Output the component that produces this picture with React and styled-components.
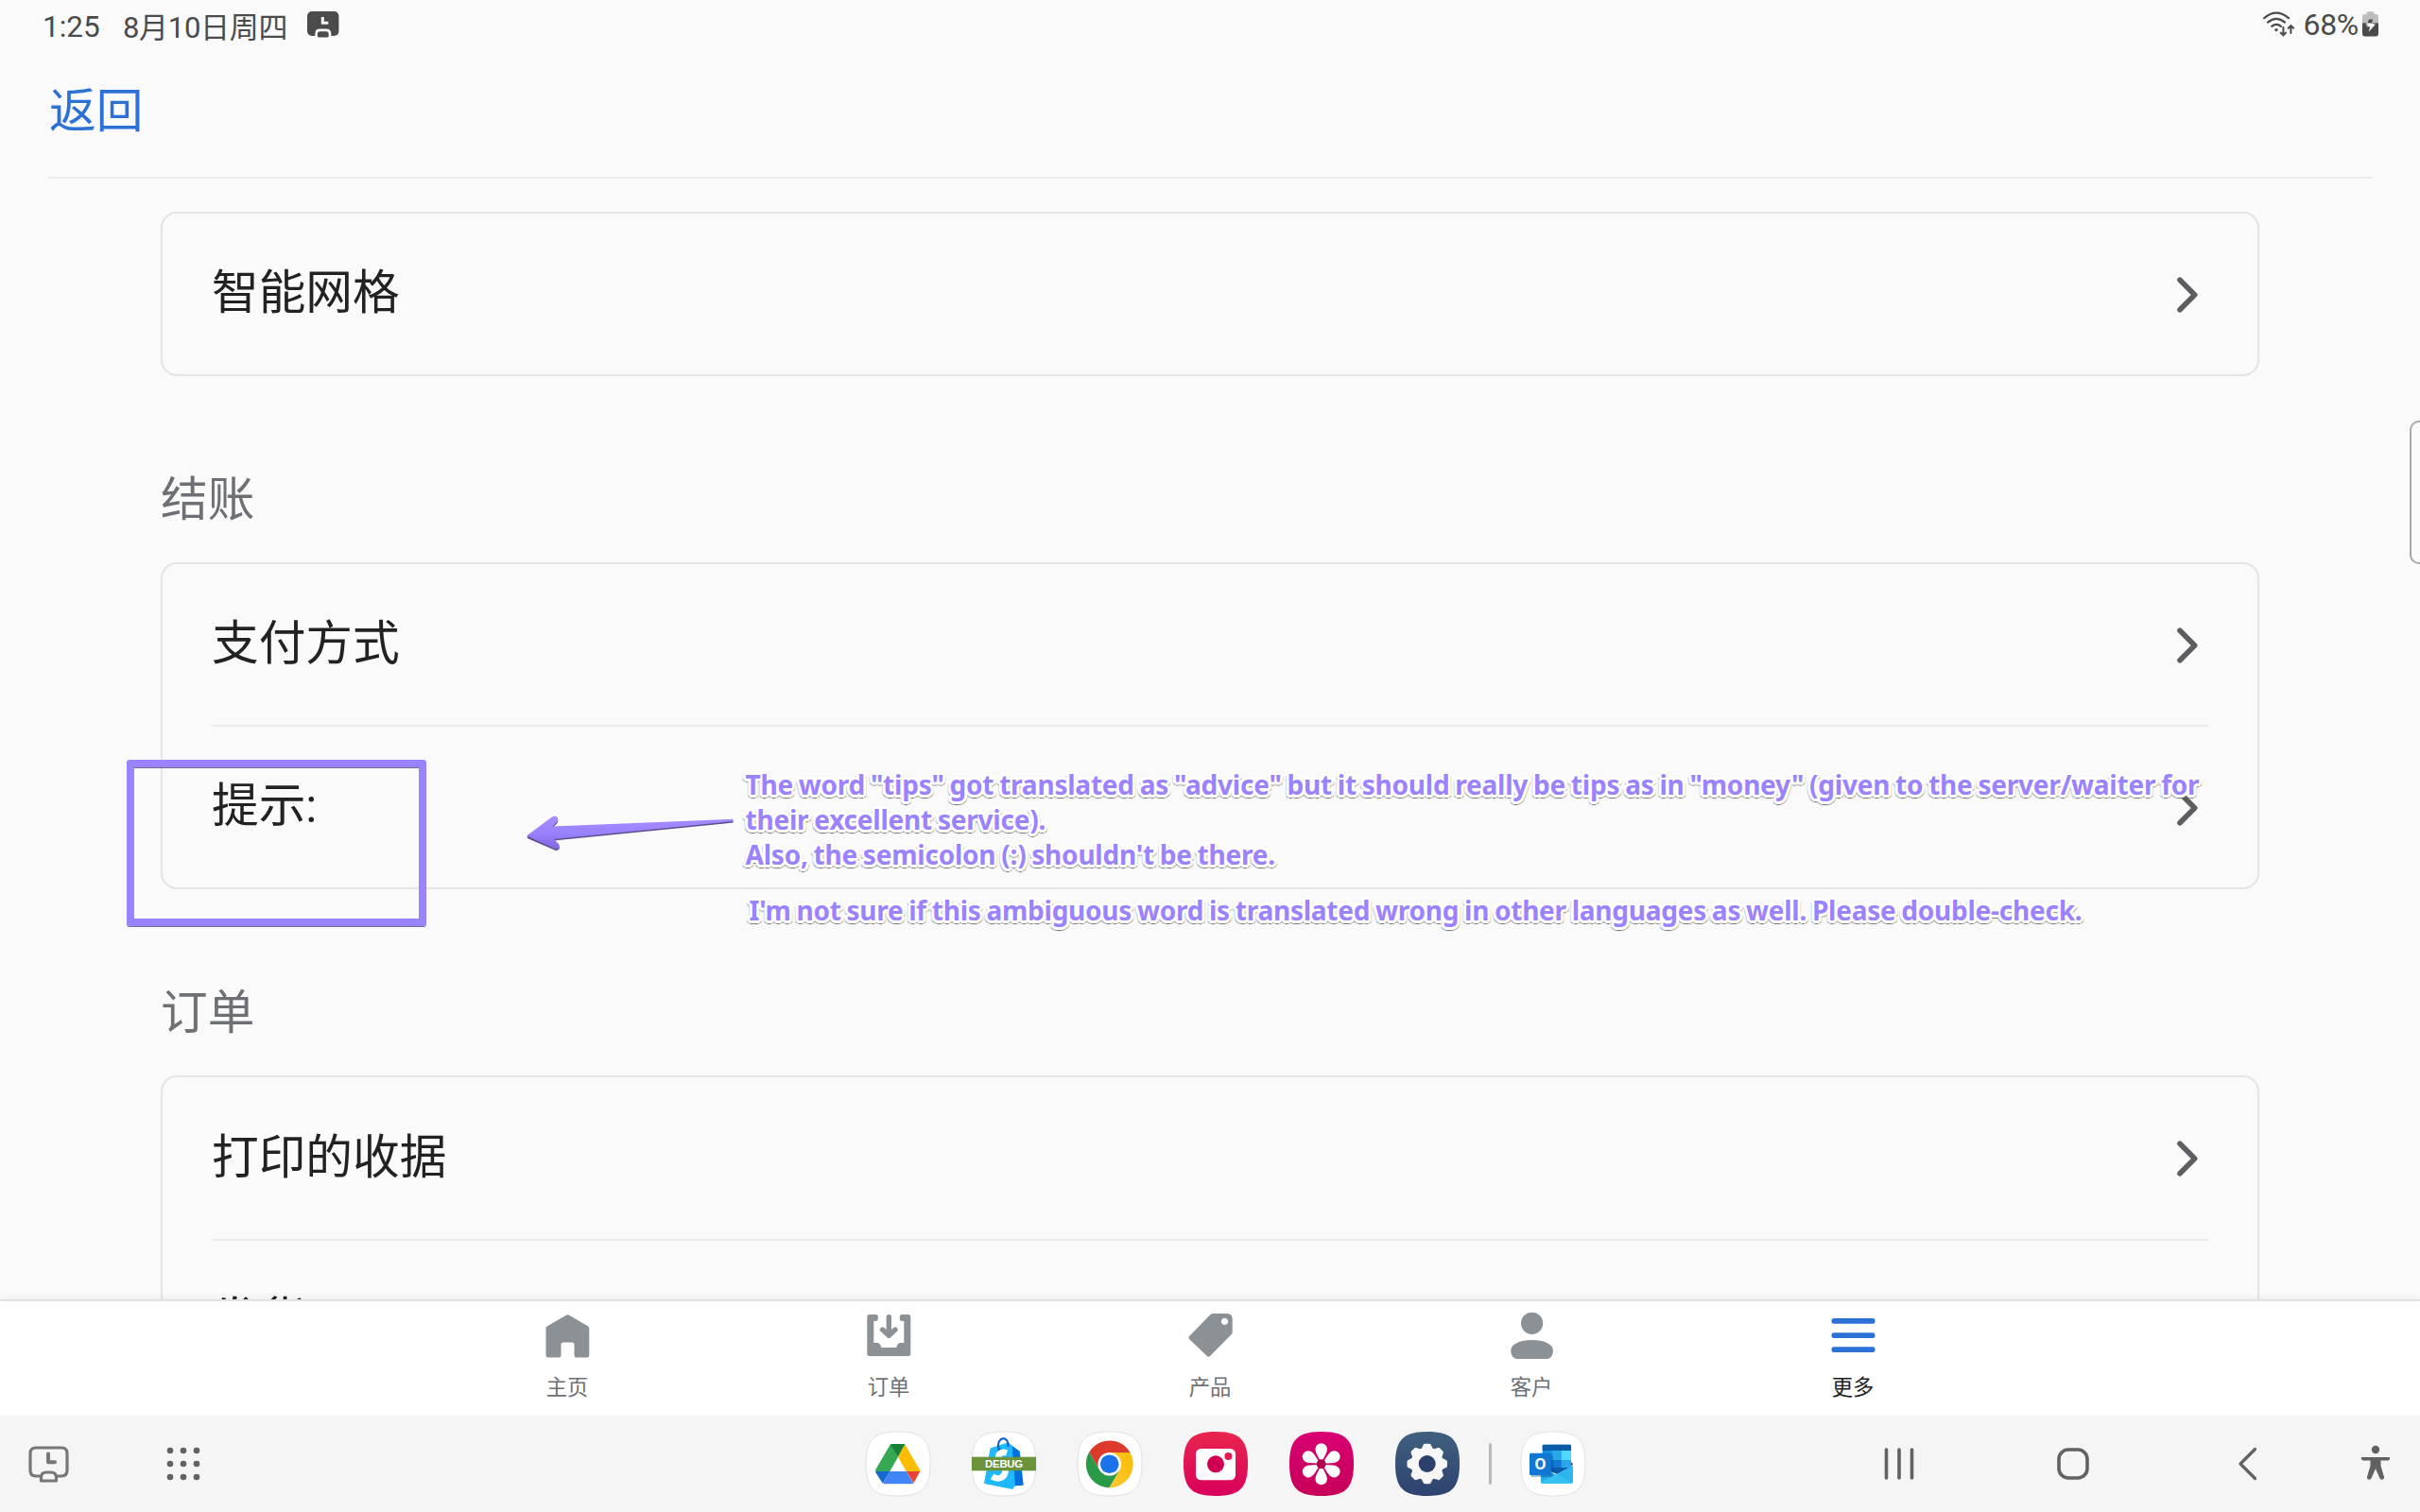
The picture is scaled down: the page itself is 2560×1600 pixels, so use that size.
import React from "react";
import styled, { createGlobalStyle } from "styled-components";

const GlobalStyle = createGlobalStyle`
  * { box-sizing: border-box; }
  body { margin: 0; background: #fafafa; }
`;

const Screen = styled.div`
  position: relative;
  display: flex;
  flex-direction: column;
  width: 2560px;
  height: 1600px;
  overflow: hidden;
  background: #fafafa;
  color: #202223;
  font-family: Roboto, "Noto Sans CJK SC", sans-serif;
`;

const StatusBar = styled.header`
  display: flex;
  justify-content: space-between;
  height: 56px;
  padding: 12px 44px 0 45px;
  color: #4b4b4b;
  font-size: 31.5px;
  line-height: 34px;
  white-space: pre;
`;

const StatusGroup = styled.div`
  display: flex;
  align-items: flex-start;
`;

const Clock = styled.span`
  width: 85px;
`;

const DateText = styled.span`
  width: 195px;
  padding-top: 1px;
  font-size: 31px;
  letter-spacing: -0.3px;
`;

const Battery = styled.span`
  margin: -3px 4px 0 8px;
  font-size: 32px;
  letter-spacing: -0.3px;
`;

const TopBar = styled.nav`
  display: flex;
  height: 133px;
  margin: 0 51px;
  padding: 24px 0 0 1px;
  border-bottom: 2px solid #ebebeb;
`;

const BackLink = styled.a`
  color: #2c72d6;
  font-size: 49.7px;
  line-height: 76px;
`;

const Content = styled.main`
  flex: 1;
  min-height: 0;
  overflow: hidden;
  padding: 35px 170px 0;
`;

const Section = styled.section`
  display: flex;
  flex-direction: column;
`;

const SectionTitle = styled.h2`
  height: 197px;
  margin: 0;
  padding-top: 93px;
  color: #6d7175;
  font-size: 49.7px;
  font-weight: 400;
  line-height: 76px;
`;

const Card = styled.div`
  display: flex;
  flex-direction: column;
  padding: 0 51px;
  border: 2px solid #e4e5e5;
  border-radius: 17px;
`;

const Row = styled.div`
  display: flex;
  flex-shrink: 0;
  justify-content: space-between;
  align-items: center;
  height: ${(p) => p.$height + (p.$divided ? 2 : 0)}px;
  padding: 1px 10px 0 1px;
  border-top: ${(p) => (p.$divided ? "2px solid #ebebeb" : "none")};
`;

const RowLabel = styled.span`
  padding-bottom: 3px;
  font-size: 49.7px;
  line-height: 76px;
`;

const TabBar = styled.nav`
  display: flex;
  justify-content: center;
  height: 123px;
  border-top: 2px solid #e3e3e3;
  background: #fff;
  box-shadow: 0 0 9px rgba(0, 0, 0, 0.07);
  z-index: 1;
`;

const Tab = styled.div`
  display: flex;
  flex-direction: column;
  align-items: center;
  width: 340px;
  padding-top: 10px;
  color: ${(p) => (p.$active ? "#202223" : "#6d7175")};
  font-size: 22.3px;
  line-height: 34px;
`;

const TabIcon = styled.svg`
  width: 52px;
  height: 52px;
  margin-bottom: 12px;
  color: ${(p) => (p.$active ? "#2c72d6" : "#8c9196")};
  fill: currentColor;
`;

const TaskBar = styled.footer`
  display: grid;
  grid-template-columns: 916px 1fr 880px;
  align-items: center;
  height: 102px;
  background: #f5f5f5;
  z-index: 1;
`;

const TaskLeft = styled.div`
  display: flex;
  align-items: center;
  gap: 102px;
  padding-left: 29px;
`;

const Dock = styled.div`
  display: flex;
  align-items: center;
  gap: 44px;
`;

const DockDivider = styled.span`
  width: 3px;
  height: 44px;
  margin: 0 -13px;
  border-radius: 2px;
  background: #b9b9b9;
`;

const SystemNav = styled.div`
  display: flex;
  align-items: center;
  justify-content: flex-end;
  padding-right: 29px;
`;

const NavGlyph = styled.svg`
  width: 36px;
  height: 40px;
  margin-left: ${(p) => p.$gap}px;
  overflow: visible;
  fill: none;
  stroke: #626262;
  stroke-width: 3.6;
  stroke-linecap: round;
  stroke-linejoin: round;
`;

const EdgeHandle = styled.div`
  position: absolute;
  left: 2549px;
  top: 445px;
  width: 20px;
  height: 152px;
  border: 2px solid #a9a9a9;
  border-radius: 10px;
  background: #fbfbfb;
`;

const Highlight = styled.div`
  position: absolute;
  left: 134px;
  top: 804px;
  width: 317px;
  height: 176px;
  border: 8px solid #9b82fe;
  border-radius: 3px;
  box-shadow: 0 1px 0 rgba(70, 60, 110, 0.75), inset 0 1px 0 rgba(70, 60, 110, 0.75);
`;

const Arrow = styled.svg`
  position: absolute;
  left: 550px;
  top: 857px;
  width: 240px;
  height: 50px;
`;

const Note = styled.p`
  position: absolute;
  left: ${(p) => p.$left}px;
  top: ${(p) => p.$top}px;
  margin: 0;
  color: #9b82fe;
  font-family: "Noto Sans", sans-serif;
  font-size: 28px;
  font-weight: 700;
  line-height: 36.9px;
  letter-spacing: ${(p) => p.$track}px;
  word-spacing: -1.2px;
  white-space: pre;
  text-shadow:
    2px 0 0 #fff, -2px 0 0 #fff, 0 2px 0 #fff, 0 -2px 0 #fff,
    2px 2px 0 #fff, -2px 2px 0 #fff, 2px -2px 0 #fff, -2px -2px 0 #fff,
    3px 1px 0 #fff, -3px 1px 0 #fff, 1px 3px 0 #fff, -1px 3px 0 #fff,
    2px 3px 1px #777, -2px 3px 1px #777, 0 4px 1px #777,
    3px 2px 1px #999, -3px 2px 1px #999;
`;

const Chevron = () => (
  <svg width="26" height="42" viewBox="0 0 26 42" fill="none" stroke="#5c5d61" strokeWidth="5.6" strokeLinecap="round" strokeLinejoin="round">
    <path d="M5 5.2 20.7 21 5 36.8" />
  </svg>
);

const SQUIRCLE = "M0 34C0 8.5 8.5 0 34 0S68 8.5 68 34 59.5 68 34 68 0 59.5 0 34Z";

const AppIcon = ({ fill = "#fff", edge, children }) => (
  <svg width="68" height="68" viewBox="0 0 68 68" overflow="visible">
    <path d={SQUIRCLE} fill={fill} stroke={edge ? "#e2e2e2" : "none"} strokeWidth="1" />
    {children}
  </svg>
);

const ScreenClockIcon = () => (
  <svg width="34" height="29" viewBox="0 0 34 29">
    <rect width="33.4" height="26" rx="5" fill="#4b4b4b" />
    <path d="M16.3 6V12.3H22.3" stroke="#fafafa" strokeWidth="3" fill="none" />
    <path d="M8.3 29V24Q8.3 18.6 13.5 18.6H20Q25.3 18.6 25.3 24V29Z" fill="#fafafa" />
    <path d="M10.8 26V24Q10.8 21.3 13.5 21.3H20Q22.7 21.3 22.7 24V26Q22.7 27.6 21 27.6H12.5Q10.8 27.6 10.8 26Z" fill="#4b4b4b" />
  </svg>
);

const WifiIcon = () => (
  <svg width="34" height="28" viewBox="0 0 34 28" fill="none" stroke="#4b4b4b" strokeWidth="2.2" strokeLinecap="round">
    <path d="M1.2 7.2Q14 -3.8 27 7.2M5 11.6Q14 4 23 11.6M9.2 15.8Q14 12 19 15.8" />
    <circle cx="14" cy="19.6" r="1.7" fill="#4b4b4b" stroke="none" />
    <path d="M21.4 17V25M18.7 22.6 21.4 25.3 24.1 22.6M29.4 23V15.6M26.7 17.8 29.4 15.1 32.1 17.8" strokeWidth="2" />
  </svg>
);

const BatteryIcon = () => (
  <svg width="17" height="27" viewBox="0 0 17 27">
    <path d="M4.5 3V2Q4.5 .2 6.3 .2H10.7Q12.5 .2 12.5 2V3H14Q17 3 17 6V13H0V6Q0 3 3 3Z" fill="#bdbdbd" />
    <path d="M0 12.5H17V23.5Q17 26.5 14 26.5H3Q0 26.5 0 23.5Z" fill="#4b4b4b" />
    <path d="M7 8.5H11L10 12.5H5.5Z" fill="#4b4b4b" />
    <path d="M5 12.5H9L8.8 14.6H3.6ZM9.5 12.5 13.8 14 6.6 21.8 8.2 16.2H4Z" fill="#fafafa" />
  </svg>
);

const tabs = [
  {
    label: "主页",
    icon: <path d="M26.5 4.2Q27.5 4.2 28.5 5L48.2 16.6Q49.300 17.400 49.300 19V47Q49.300 49.500 46.800 49.500H36Q33.500 49.500 33.500 47V36Q33.500 33.500 31 33.500H22Q19.500 33.500 19.500 36V47Q19.500 49.500 17 49.500H6Q3.500 49.500 3.500 47V19Q3.500 17.400 4.700 16.600L24.500 5Q25.500 4.200 26.500 4.200Z" />,
  },
  {
    label: "订单",
    icon: (
      <>
        <path d="M5.800 4H12.300Q14.800 4 14.800 6.500V8.500Q14.800 11 12.300 11H10.300V34H14.300Q16.300 34 17 35.800L18.600 39H34L35.600 35.800Q36.300 34 38.300 34H42.300V11H40.300Q37.800 11 37.800 8.500V6.500Q37.800 4 40.300 4H46.800Q49.300 4 49.300 6.500V45.500Q49.300 48 46.800 48H5.800Q3.300 48 3.300 45.500V6.500Q3.300 4 5.800 4Z" />
        <path d="M26.300 6.700V24M19.600 20 26.300 26.300 33 20" fill="none" stroke="currentColor" strokeWidth="5.400" strokeLinecap="round" strokeLinejoin="round" />
      </>
    ),
  },
  {
    label: "产品",
    icon: <path fillRule="evenodd" d="M26.500 4Q27.500 3 29 3H44Q49.700 3 49.700 9V22.500Q49.700 24 48.500 25.200L26 48Q24.500 49.500 23 48L4.500 30.500Q2.500 28.500 4.500 26.500ZM41.500 7.800a3.600 3.600 0 1 0 .01 0Z" />,
  },
  {
    label: "客户",
    icon: (
      <>
        <circle cx="26.600" cy="13.300" r="11.600" />
        <path d="M4.300 41.500C4.300 36 13.300 31 26.600 31S48.900 36 48.900 41.500C48.900 47.500 46.300 51 42.300 51H10.800C6.800 51 4.300 47.500 4.300 41.500Z" />
      </>
    ),
  },
  {
    label: "更多",
    active: true,
    icon: (
      <>
        <rect x="3.500" y="8" width="46" height="5.700" rx="2.500" />
        <rect x="3.500" y="23.200" width="46" height="5.700" rx="2.500" />
        <rect x="3.500" y="38.300" width="46" height="5.700" rx="2.500" />
      </>
    ),
  },
];

const DriveIcon = () => (
  <AppIcon edge>
    <path d="M27.500 13 34 26.700 25.300 42H10.500Q9.700 41 10.500 39.800L25.500 14Q26.300 13 27.500 13Z" fill="#34a853" />
    <path d="M26 13.500Q27 13 28 13H40Q41 13 41.500 13.500L34 26.700Z" fill="#188038" />
    <path d="M41.300 13.300 57 40.500Q57.500 41.500 57.300 42H42.700L34 26.700Z" fill="#fbbc04" />
    <path d="M42.700 42H57.300L50.500 54.500Z" fill="#ea4335" />
    <path d="M25.300 42H42.700L50.300 54.700 48.500 55.300H19.500L18 54.700Z" fill="#4285f4" />
    <path d="M10.200 42H25.300L17.800 54.700 10.500 43.500Z" fill="#1967d2" />
  </AppIcon>
);

const PosIcon = () => (
  <AppIcon edge>
    <path d="M38 11.500 50.700 20.700 54.700 56.700 42 57.500Z" fill="#0071dc" />
    <path d="M19.500 17.500 38.700 11.300 42.700 15.700 46 57 43.300 61 13 55Z" fill="#20b9ff" />
    <path d="M29.500 20.500C26 14 29 7.300 33.300 7.300C37 7.300 38.500 11 38.500 16" fill="none" stroke="#0b5fc4" strokeWidth="2" />
    <circle cx="29.800" cy="20.200" r="2.300" fill="#0b5fc4" />
    <path d="M37 22.500C31 20.500 26.500 24 29 29C31 33 37 35 35.500 42.500C34 50 27 51 21.500 47.500" fill="none" stroke="#fff" strokeWidth="6.500" />
    <rect x="0" y="26.700" width="68" height="14.600" fill="#6b933a" />
    <text x="34" y="38" textAnchor="middle" fill="#fff" fontFamily="Liberation Sans, sans-serif" fontWeight="700" fontSize="11.300" letterSpacing="-0.200">DEBUG</text>
  </AppIcon>
);

const ChromeIcon = () => (
  <AppIcon edge>
    <defs>
      <linearGradient id="chromeYellow" x1="1" y1="0" x2="0" y2="1">
        <stop offset="0" stopColor="#fbbc04" />
        <stop offset="1" stopColor="#fcc934" />
      </linearGradient>
    </defs>
    <g transform="translate(33.700 34.300)">
      <path d="M-21.500 -12.650A25 25 0 0 1 21.700 -12.300L0 -12.300-10.650 6.150Z" fill="#dd3a2b" />
      <path d="M21.700 -12.300A25 25 0 0 1 -.2 24.950L10.650 6.150 0 -12.300Z" fill="url(#chromeYellow)" />
      <path d="M-.2 24.950A25 25 0 0 1 -21.500 -12.650L-10.650 6.150 10.650 6.150Z" fill="#2a9a48" />
      <circle r="12.300" fill="#fff" />
      <circle r="9.800" fill="#1a73e8" />
    </g>
  </AppIcon>
);

const CameraIcon = () => (
  <AppIcon fill="url(#cameraBg)">
    <defs>
      <linearGradient id="cameraBg" x1="0" y1="0" x2="0" y2="1">
        <stop offset="0" stopColor="#e9254d" />
        <stop offset="1" stopColor="#da005c" />
      </linearGradient>
    </defs>
    <rect x="13" y="18" width="42" height="33.300" rx="5.500" fill="#fff" />
    <circle cx="34" cy="34.300" r="9" fill="#cf0052" />
    <circle cx="47.400" cy="26" r="4" fill="#e51a50" />
  </AppIcon>
);

const GalleryIcon = () => (
  <AppIcon fill="url(#galleryBg)">
    <defs>
      <linearGradient id="galleryBg" x1="0" y1="0" x2="0" y2="1">
        <stop offset="0" stopColor="#d90073" />
        <stop offset="1" stopColor="#c60058" />
      </linearGradient>
    </defs>
    <g transform="translate(33.700 34.300)">
      {[0, 60, 120, 180, 240, 300].map((angle) => (
        <path key={angle} transform={`rotate(${angle})`} d="M0 0C-2 -7-6.200-11-6.200-16A6.200 6 0 0 1 6.200-16C6.200-11 2-7 0 0Z" fill="#fff" />
      ))}
      <circle r="5" fill="#b3004c" />
    </g>
  </AppIcon>
);

const SettingsIcon = () => (
  <AppIcon fill="url(#settingsBg)">
    <defs>
      <linearGradient id="settingsBg" x1="0" y1="0" x2="0" y2="1">
        <stop offset="0" stopColor="#40607f" />
        <stop offset="1" stopColor="#2e426f" />
      </linearGradient>
    </defs>
    <g transform="translate(33.700 34)">
      <circle r="17.300" fill="#f7f7f7" />
      {[0, 45, 90, 135, 180, 225, 270, 315].map((angle) => (
        <path key={angle} transform={`rotate(${angle})`} d="M-6.500-15 -4.300-19.500Q-3.800-21.200-2.500-21.200H2.500Q3.800-21.200 4.300-19.500L6.500-15Z" fill="#f7f7f7" />
      ))}
      <circle r="9" fill="#2d406c" />
    </g>
  </AppIcon>
);

const OutlookIcon = () => (
  <AppIcon edge>
    <rect x="22.700" y="13.700" width="30.300" height="28" rx="1.500" fill="#1490df" />
    <path d="M22.700 20V15Q22.700 13.700 24 13.700H51.700Q53 13.700 53 15V20Z" fill="#0a5ca8" />
    <rect x="32.700" y="20" width="10" height="10" fill="#28a8ea" />
    <rect x="42.700" y="20" width="10.300" height="10" fill="#50d9ff" />
    <rect x="22.700" y="30" width="10" height="10" fill="#0f5fae" />
    <rect x="32.700" y="30" width="10" height="10" fill="#0f78d4" />
    <rect x="42.700" y="30" width="10.300" height="10" fill="#28a8ea" />
    <path d="M53 32 55 34.500 53 36Z" fill="#123b6d" />
    <path d="M22 39 38 46 54.700 36V53Q54.700 55 52.700 55H23Q21 55 21 53V39Z" fill="#28a9e8" />
    <path d="M38 45 54.700 54Q54 55 52.700 55H23Q21 55 21 53Z" fill="#35c1f1" />
    <path d="M22 38H52L38 45Z" fill="#0d5aa6" />
    <path d="M54.700 35.500V53.500L38 44.800Z" fill="#2fb5ee" />
    <rect x="10" y="24" width="24" height="24" rx="2" fill="#0a3f73" opacity=".35" />
    <rect x="9" y="22.700" width="23" height="23.300" rx="1.600" fill="#1078d4" />
    <text x="20.400" y="39.600" textAnchor="middle" fill="#fff" fontFamily="Open Sans, sans-serif" fontWeight="700" fontSize="15.500">O</text>
  </AppIcon>
);

const TaskClockIcon = () => (
  <svg width="45" height="42" viewBox="0 0 45 42" fill="none" stroke="#777" strokeWidth="3.200" strokeLinecap="round" strokeLinejoin="round">
    <path d="M13 34H9Q3 34 3 28V10Q3 4 9 4H36Q42 4 42 10V28Q42 34 36 34H32" />
    <path d="M22 10.500V19.300H29" strokeWidth="4" />
    <path d="M14.500 39V35.500Q14.500 30 20 30H25Q30.500 30 30.500 35.500V39Z" />
  </svg>
);

const AppsGridIcon = () => (
  <svg width="36" height="36" viewBox="0 0 36 36" fill="#626262">
    {[4, 18, 32].map((y) => [4, 18, 32].map((x) => <circle key={`${x}-${y}`} cx={x} cy={y} r="3.300" />))}
  </svg>
);

const ListCard = ({ rows }) => (
  <Card>
    {rows.map((row, index) => (
      <Row key={row.label} $height={row.height || 170} $divided={index > 0}>
        <RowLabel>{row.label}</RowLabel>
        <Chevron />
      </Row>
    ))}
  </Card>
);

export default function App() {
  return (
    <Screen lang="zh-CN">
      <GlobalStyle />
      <StatusBar>
        <StatusGroup>
          <Clock>1:25</Clock>
          <DateText>8月10日周四</DateText>
          <ScreenClockIcon />
        </StatusGroup>
        <StatusGroup>
          <WifiIcon />
          <Battery>68%</Battery>
          <BatteryIcon />
        </StatusGroup>
      </StatusBar>
      <TopBar>
        <BackLink>返回</BackLink>
      </TopBar>
      <Content>
        <Section>
          <ListCard rows={[{ label: "智能网格" }]} />
        </Section>
        <Section>
          <SectionTitle>结账</SectionTitle>
          <ListCard rows={[{ label: "支付方式" }, { label: "提示:" }]} />
        </Section>
        <Section>
          <SectionTitle>订单</SectionTitle>
          <ListCard rows={[{ label: "打印的收据", height: 171 }, { label: "发货", height: 169 }]} />
        </Section>
      </Content>
      <TabBar>
        {tabs.map((tab) => (
          <Tab key={tab.label} $active={tab.active}>
            <TabIcon viewBox="0 0 52 52" $active={tab.active}>{tab.icon}</TabIcon>
            {tab.label}
          </Tab>
        ))}
      </TabBar>
      <TaskBar>
        <TaskLeft>
          <TaskClockIcon />
          <AppsGridIcon />
        </TaskLeft>
        <Dock>
          <DriveIcon />
          <PosIcon />
          <ChromeIcon />
          <CameraIcon />
          <GalleryIcon />
          <SettingsIcon />
          <DockDivider />
          <OutlookIcon />
        </Dock>
        <SystemNav>
          <NavGlyph viewBox="0 0 36 40" $gap={0}>
            <path d="M4.500 5V35M18 5V35M31.500 5V35" />
          </NavGlyph>
          <NavGlyph viewBox="0 0 36 40" $gap={148}>
            <rect x="3" y="5" width="30" height="30" rx="10" />
          </NavGlyph>
          <NavGlyph viewBox="0 0 36 40" $gap={148}>
            <path d="M26.500 4.500 11 20 26.500 35.500" strokeWidth="3.200" />
          </NavGlyph>
          <NavGlyph viewBox="0 0 36 40" $gap={100}>
            <circle cx="18" cy="5" r="4.200" fill="#626262" stroke="none" />
            <path d="M3.500 13.500H32.500V15Q32.500 16 31 16H23V22L26.500 34Q27 36 25 36.300 23.500 36.600 22.800 35L18.500 25H17.500L13.200 35Q12.500 36.600 11 36.300 9 36 9.500 34L13 22V16H5Q3.500 16 3.500 15Z" fill="#626262" stroke="#626262" strokeWidth="1" />
          </NavGlyph>
        </SystemNav>
      </TaskBar>
      <EdgeHandle />
      <Highlight />
      <Arrow viewBox="0 0 240 50">
        <defs>
          <linearGradient id="arrowFill" x1="0" y1="0" x2="0" y2="1">
            <stop offset="0" stopColor="#a78dff" />
            <stop offset="0.500" stopColor="#9b82fe" />
            <stop offset="1" stopColor="#8168e0" />
          </linearGradient>
        </defs>
        <path d="M8 27.700 34 8.500Q38 6 40 9.500 41 12.500 38 15L34.500 18.500 225.500 10.700V13L36 32 40 36Q43 39 41 41.500 38.500 43.500 35.500 41.500L10 30.500Q6.500 29 8 27.700Z" fill="#5d4f8c" transform="translate(0 .6)" />
        <path d="M8 26.700 34 7.500Q38 5 40 8.500 41 11.500 38 14L34.500 17.500 225.500 9.700V12L36 31 40 35Q43 38 41 40.500 38.500 42.500 35.500 40.500L9.500 28.500Q6.500 28 8 26.700Z" fill="url(#arrowFill)" />
      </Arrow>
      <Note $left={788.5} $top={812} $track={-0.215}>
        {'The word "tips" got translated as "advice" but it should really be tips as in "money" (given to the server/waiter for\ntheir excellent service).\nAlso, the semicolon (:) shouldn\'t be there.'}
      </Note>
      <Note $left={792.5} $top={945} $track={-0.238}>
        {"I'm not sure if this ambiguous word is translated wrong in other languages as well. Please double-check."}
      </Note>
    </Screen>
  );
}
